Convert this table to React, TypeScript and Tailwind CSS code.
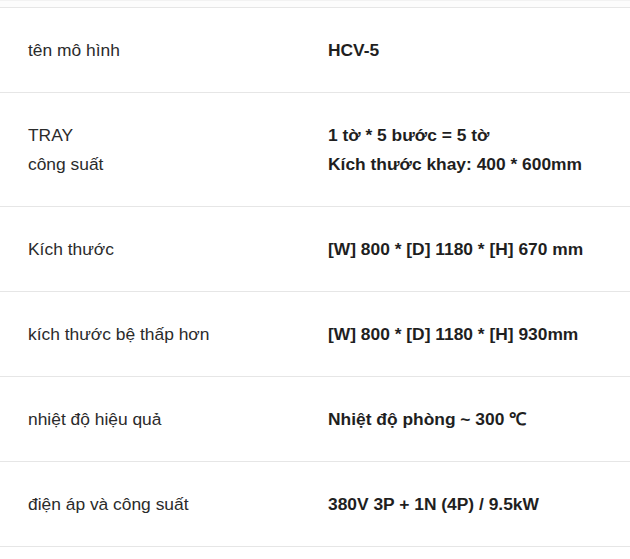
const rows: { label: string[]; value: string[] }[] = [
  { label: ["tên mô hình"], value: ["HCV-5"] },
  {
    label: ["TRAY", "công suất"],
    value: ["1 tờ * 5 bước = 5 tờ", "Kích thước khay: 400 * 600mm"],
  },
  { label: ["Kích thước"], value: ["[W] 800 * [D] 1180 * [H] 670 mm"] },
  { label: ["kích thước bệ thấp hơn"], value: ["[W] 800 * [D] 1180 * [H] 930mm"] },
  { label: ["nhiệt độ hiệu quả"], value: ["Nhiệt độ phòng ~ 300 ℃"] },
  { label: ["điện áp và công suất"], value: ["380V 3P + 1N (4P) / 9.5kW"] },
];

export default function App() {
  return (
    <div className="w-[630px] min-h-[559px] bg-white font-['Liberation_Sans',Arial,sans-serif] text-[17.4px] leading-[29px]">
      {/* tail of the previous row */}
      <div className="h-[8px] bg-[#fcfcfc] border-t border-[#f2f2f2] border-b border-b-[#e6e6e6]" />
      <table className="w-full border-collapse">
        <tbody>
          {rows.map((r, i) => (
            <tr key={i} className="border-b border-[#e6e6e6]">
              <td className="w-[300px] px-[28px] pt-[28px] pb-[27px] align-top text-[#2b2b2b]">
                {r.label.map((l) => (
                  <div key={l}>{l}</div>
                ))}
              </td>
              <td className="px-[28px] pt-[28px] pb-[27px] align-top font-bold text-[#1f1f1f]">
                {r.value.map((v) => (
                  <div key={v}>{v}</div>
                ))}
              </td>
            </tr>
          ))}
        </tbody>
      </table>
    </div>
  );
}
